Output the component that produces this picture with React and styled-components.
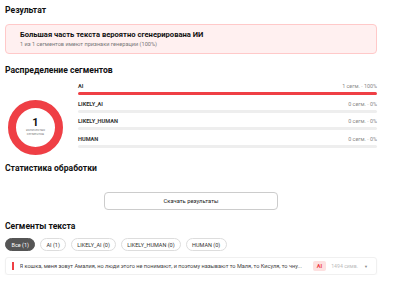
import React from 'react'
import styled, { createGlobalStyle } from 'styled-components'

const GlobalStyle = createGlobalStyle`
  html, body {
    margin: 0;
    padding: 0;
    background: #fff;
  }
  body {
    font-family: Roboto, "Noto Sans", Arial, sans-serif;
    color: #111;
  }
`

const RED = '#ef3f45'

const distribution = [
  { key: 'AI', count: 1, pct: 100 },
  { key: 'LIKELY_AI', count: 0, pct: 0 },
  { key: 'LIKELY_HUMAN', count: 0, pct: 0 },
  { key: 'HUMAN', count: 0, pct: 0 },
]

const filters = [
  { label: 'Все (1)', active: true },
  { label: 'AI (1)' },
  { label: 'LIKELY_AI (0)' },
  { label: 'LIKELY_HUMAN (0)' },
  { label: 'HUMAN (0)' },
]

const Page = styled.div`
  width: 372px;
  padding: 4px 5px 0;
`

const Heading = styled.h3`
  margin: ${p => p.$top || 0}px 0 0;
  font-size: 8.6px;
  line-height: 12px;
  font-weight: 700;
`

const Verdict = styled.div`
  margin-top: 8px;
  height: 30px;
  box-sizing: border-box;
  padding: 5px 14px;
  background: #fff0f0;
  border: 1px solid #ffc9c9;
  border-radius: 4px;
`

const VerdictTitle = styled.div`
  font-size: 7.6px;
  line-height: 10px;
  font-weight: 700;
`

const VerdictSub = styled.div`
  font-size: 5.6px;
  line-height: 8px;
  color: #777;
`

const Dist = styled.div`
  display: flex;
  align-items: flex-start;
  gap: 15px;
  margin-top: 6px;
`

const Ring = styled.div`
  position: relative;
  flex: none;
  width: 55px;
  height: 55px;
  margin: 18px 0 0 3px;
  display: flex;
  flex-direction: column;
  align-items: center;
  justify-content: center;
`

const RingSvg = styled.svg`
  position: absolute;
  inset: 0;
`

const RingNum = styled.div`
  font-size: 11px;
  line-height: 11px;
  font-weight: 700;
  margin-top: -2px;
`

const RingLabel = styled.div`
  font-size: 3.5px;
  line-height: 4.5px;
  color: #888;
  text-align: center;
`

const Bars = styled.div`
  flex: 1;
  display: flex;
  flex-direction: column;
  gap: 4.6px;
`

const BarRow = styled.div`
  display: flex;
  flex-direction: column;
  gap: 2px;
`

const BarHead = styled.div`
  display: flex;
  justify-content: space-between;
  line-height: 8px;
`

const BarLabel = styled.span`
  font-size: 5.6px;
  font-weight: 700;
  color: #333;
`

const BarValue = styled.span`
  font-size: 5.4px;
  color: #888;
`

const Track = styled.div`
  height: 3px;
  border-radius: 2px;
  background: #eee;
  overflow: hidden;
`

const Fill = styled.div`
  height: 100%;
  background: ${RED};
`

const Center = styled.div`
  display: flex;
  justify-content: center;
  margin-top: 18px;
`

const Download = styled.button`
  width: 174px;
  height: 18px;
  border: 1px solid #ccc;
  border-radius: 4px;
  background: #fff;
  font-family: inherit;
  font-size: 5.8px;
  color: #222;
  padding: 0;
`

const Chips = styled.div`
  display: flex;
  gap: 4.5px;
  margin-top: 6px;
`

const Chip = styled.div`
  height: 13px;
  box-sizing: border-box;
  padding: 0 5.5px;
  display: flex;
  align-items: center;
  border-radius: 7px;
  border: 1px solid ${p => (p.$active ? '#555' : '#ddd')};
  background: ${p => (p.$active ? '#555' : '#fff')};
  color: ${p => (p.$active ? '#fff' : '#333')};
  font-size: 5.5px;
`

const Segment = styled.div`
  margin-top: 6px;
  height: 18px;
  box-sizing: border-box;
  display: flex;
  align-items: center;
  padding: 0 8px 0 6px;
  border: 1px solid #f0f0f0;
  border-radius: 3px;
  box-shadow: 0 1px 2px rgba(0, 0, 0, 0.04);
`

const Marker = styled.div`
  width: 1.5px;
  height: 8px;
  background: ${RED};
  margin-right: 6px;
`

const SegText = styled.div`
  flex: 1;
  font-size: 5.6px;
  color: #444;
  white-space: nowrap;
  overflow: hidden;
`

const Badge = styled.span`
  font-size: 5.6px;
  font-weight: 700;
  color: ${RED};
  background: #fde0e0;
  border-radius: 2px;
  padding: 2px 4px;
  margin-left: 10px;
`

const Chars = styled.span`
  font-size: 5.2px;
  color: #bbb;
  margin-left: 5px;
`

const Caret = styled.span`
  font-size: 4px;
  color: #888;
  margin-left: 6px;
`

export default function App() {
  const r = 23.5
  const c = 2 * Math.PI * r
  return (
    <Page>
      <GlobalStyle />
      <Heading>Результат</Heading>
      <Verdict>
        <VerdictTitle>Большая часть текста вероятно сгенерирована ИИ</VerdictTitle>
        <VerdictSub>1 из 1 сегментов имеют признаки генерации (100%)</VerdictSub>
      </Verdict>

      <Heading $top={10}>Распределение сегментов</Heading>
      <Dist>
        <Ring>
          <RingSvg width="55" height="55" viewBox="0 0 55 55">
            <circle cx="27.5" cy="27.5" r={r} fill="none" stroke="#eee" strokeWidth="8" />
            <circle
              cx="27.5"
              cy="27.5"
              r={r}
              fill="none"
              stroke={RED}
              strokeWidth="8"
              strokeDasharray={`${c} ${c}`}
            />
          </RingSvg>
          <RingNum>1</RingNum>
          <RingLabel>
            количество
            <br />
            сегментов
          </RingLabel>
        </Ring>
        <Bars>
          {distribution.map(d => (
            <BarRow key={d.key}>
              <BarHead>
                <BarLabel>{d.key}</BarLabel>
                <BarValue>
                  {d.count} сегм. · {d.pct}%
                </BarValue>
              </BarHead>
              <Track>
                <Fill style={{ width: `${d.pct}%` }} />
              </Track>
            </BarRow>
          ))}
        </Bars>
      </Dist>

      <Heading $top={7}>Статистика обработки</Heading>
      <Center>
        <Download>Скачать результаты</Download>
      </Center>

      <Heading $top={10}>Сегменты текста</Heading>
      <Chips>
        {filters.map(f => (
          <Chip key={f.label} $active={f.active}>
            {f.label}
          </Chip>
        ))}
      </Chips>
      <Segment>
        <Marker />
        <SegText>
          Я кошка, меня зовут Амалия, но люди этого не понимают, и поэтому называют то Маля, то Кисуля, то чну...
        </SegText>
        <Badge>AI</Badge>
        <Chars>1494 симв.</Chars>
        <Caret>▼</Caret>
      </Segment>
    </Page>
  )
}
